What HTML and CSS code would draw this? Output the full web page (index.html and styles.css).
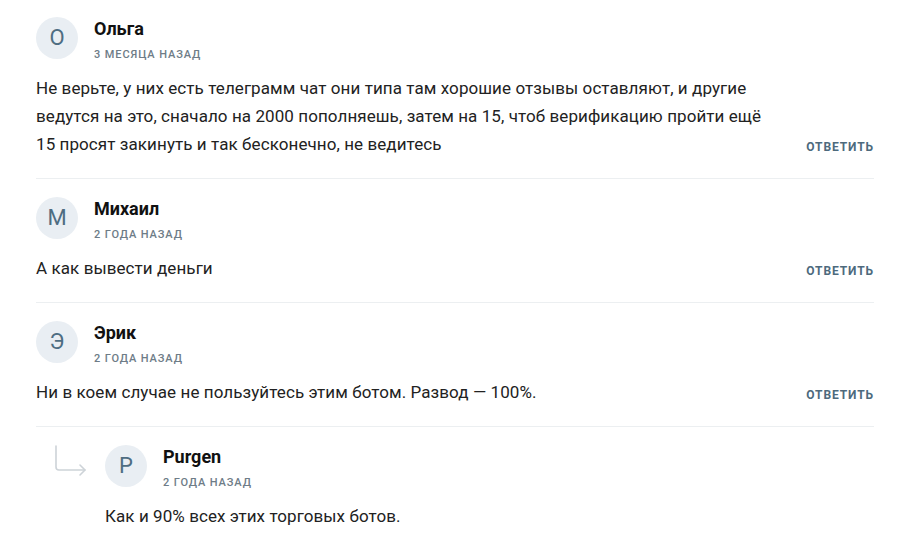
FILE: index.html
```html
<!DOCTYPE html>
<html lang="ru">

<head>
    <meta charset="UTF-8">
    <meta name="viewport" content="width=device-width, initial-scale=1.0">
    <title>Комментарии</title>
    <link rel="stylesheet" href="styles.css">
</head>

<body>
    <div class="comments">
        <div class="comment">
            <div class="comment-head">
                <div class="avatar">О</div>
                <div class="meta">
                    <div class="author">Ольга</div>
                    <div class="date">3 месяца назад</div>
                </div>
            </div>
            <div class="comment-body">
                <p class="text">Не верьте, у них есть телеграмм чат они типа там хорошие отзывы оставляют, и другие ведутся на это, сначало на 2000 пополняешь, затем на 15, чтоб верификацию пройти ещё 15 просят закинуть и так бесконечно, не ведитесь</p>
                <a class="reply-btn" href="#">Ответить</a>
            </div>
        </div>

        <div class="comment">
            <div class="comment-head">
                <div class="avatar">М</div>
                <div class="meta">
                    <div class="author">Михаил</div>
                    <div class="date">2 года назад</div>
                </div>
            </div>
            <div class="comment-body">
                <p class="text">А как вывести деньги</p>
                <a class="reply-btn" href="#">Ответить</a>
            </div>
        </div>

        <div class="comment">
            <div class="comment-head">
                <div class="avatar">Э</div>
                <div class="meta">
                    <div class="author">Эрик</div>
                    <div class="date">2 года назад</div>
                </div>
            </div>
            <div class="comment-body">
                <p class="text">Ни в коем случае не пользуйтесь этим ботом. Развод — 100%.</p>
                <a class="reply-btn" href="#">Ответить</a>
            </div>
        </div>

        <!-- answer to Эрик -->
        <div class="comment comment-child">
            <div class="child-arrow">
                <svg width="32" height="32" viewBox="0 0 32 32" fill="none" stroke="#cdd3d8" stroke-width="1.6" stroke-linecap="round" stroke-linejoin="round">
                    <path d="M1 1 V22 Q1 25 4 25 H30" />
                    <path d="M25 20 L30 25 L25 30" />
                </svg>
            </div>
            <div class="child-inner">
                <div class="comment-head">
                    <div class="avatar">P</div>
                    <div class="meta">
                        <div class="author">Purgen</div>
                        <div class="date">2 года назад</div>
                    </div>
                </div>
                <div class="comment-body">
                    <p class="text">Как и 90% всех этих торговых ботов.</p>
                </div>
            </div>
        </div>
    </div>
</body>

</html>
```
FILE: styles.css
```css
body {
    font-family: Roboto, 'Noto Sans', 'Liberation Sans', sans-serif;
    margin: 0;
    background-color: #fff;
    color: #222;
}

.comments {
    padding: 0 33px 0 36px;
}

.comment {
    padding: 17px 0 20px;
    border-bottom: 1px solid #eceff1;
}

.comment + .comment {
    padding-top: 18px;
}

.comment-head {
    display: flex;
    align-items: flex-start;
    gap: 16px;
}

.avatar {
    width: 42px;
    height: 42px;
    border-radius: 50%;
    background-color: #e9eef3;
    color: #4e6d82;
    font-size: 22px;
    line-height: 42px;
    text-align: center;
    flex-shrink: 0;
}

.meta {
    padding-top: 2px;
}

.author {
    font-size: 18px;
    font-weight: 700;
    line-height: 20px;
    color: #111;
}

.date {
    margin-top: 8px;
    font-size: 11px;
    font-weight: 500;
    line-height: 16px;
    letter-spacing: 0.9px;
    text-transform: uppercase;
    color: #6e7c87;
}

.comment-body {
    display: flex;
    align-items: flex-end;
    gap: 40px;
    margin-top: 11px;
}

.text {
    flex: 1;
    margin: 0;
    font-size: 17px;
    line-height: 28px;
    letter-spacing: 0.08px;
}

.reply-btn {
    font-size: 12px;
    font-weight: 700;
    line-height: 22px;
    letter-spacing: 0.9px;
    text-transform: uppercase;
    text-decoration: none;
    color: #4d6a7d;
    white-space: nowrap;
}

/* nested answer */
.comment-child {
    display: flex;
    border-bottom: none;
}

.child-arrow {
    width: 50px;
    padding-left: 19px;
    flex-shrink: 0;
}

.child-inner {
    flex: 1;
}
```
